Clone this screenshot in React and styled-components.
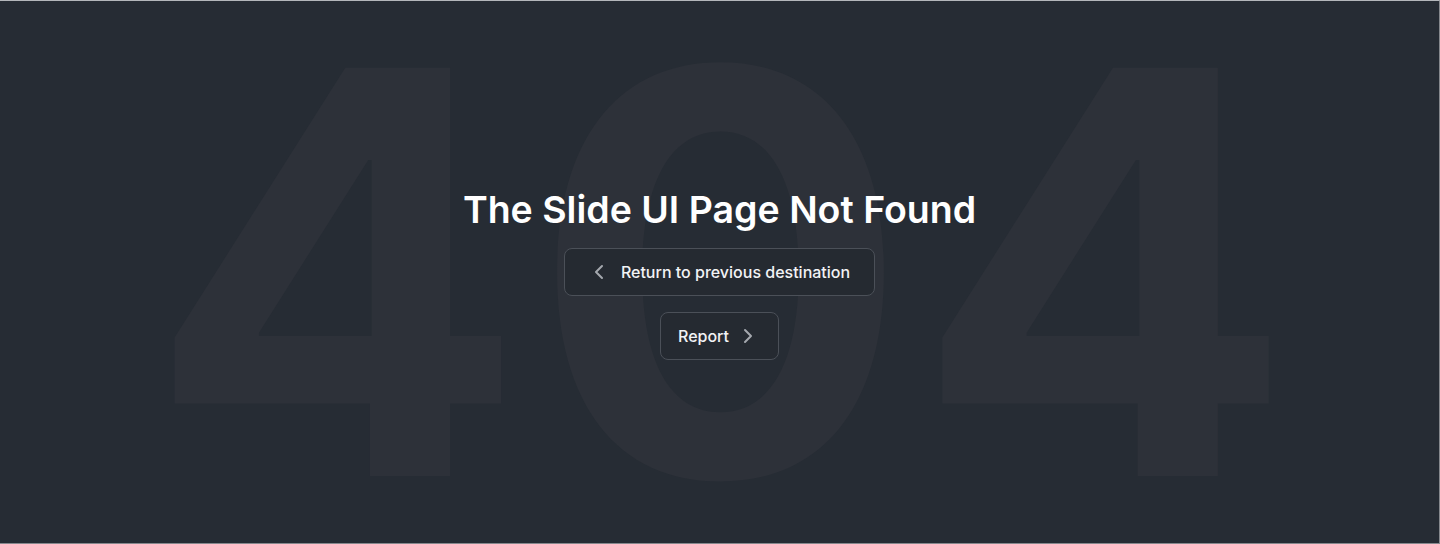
import React from "react";
import styled, { createGlobalStyle } from "styled-components";
import { ChevronLeft, ChevronRight } from "lucide-react";

const GlobalStyle = createGlobalStyle`
  html, body {
    margin: 0;
    padding: 0;
    background: #262c34;
  }
  * {
    box-sizing: border-box;
  }
`;

const Page = styled.main`
  width: 1440px;
  height: 544px;
  display: grid;
  grid-template-rows: 100%;
  grid-template-columns: 100%;
  place-items: center;
  overflow: hidden;
  background: #262c34;
  border-top: 1px solid #b4b7bb;
  border-bottom: 1px solid #85888d;
  border-right: 1px solid #85888d;
  font-family: Inter, "Noto Sans", sans-serif;
`;

const BigCode = styled.div`
  grid-area: 1 / 1;
  font-size: 561px;
  font-weight: 700;
  line-height: 1;
  letter-spacing: 5px;
  padding-left: 5px;
  color: #2d3139;
  user-select: none;
  transform: translateX(1px);
`;

const Content = styled.section`
  grid-area: 1 / 1;
  z-index: 1;
  display: flex;
  flex-direction: column;
  align-items: center;
`;

const Title = styled.h1`
  margin: 0 0 12px;
  font-size: 37.5px;
  line-height: 52px;
  font-weight: 600;
  color: #ffffff;
`;

const Actions = styled.div`
  display: flex;
  flex-direction: column;
  align-items: center;
  gap: 16px;
`;

const Button = styled.button`
  height: 48px;
  display: inline-flex;
  align-items: center;
  gap: ${(p) => p.$gap || 8}px;
  padding: ${(p) => p.$pad || "0 16px"};
  border: 1px solid #4b5058;
  border-radius: 8px;
  background: #252a31;
  color: #f2f3f5;
  font-family: Inter, "Noto Sans", sans-serif;
  font-size: 16px;
  font-weight: 500;
  cursor: pointer;

  svg {
    color: #a4a8ae;
    flex-shrink: 0;
  }
`;

const App = () => {
  return (
    <>
      <GlobalStyle />
      <Page>
        <BigCode>404</BigCode>
        <Content>
          <Title>The Slide UI Page Not Found</Title>
          <Actions>
            <Button $pad="0 24px 0 22px" $gap={10}>
              <ChevronLeft size={24} strokeWidth={2} />
              Return to previous destination
            </Button>
            <Button $pad="0 18px 0 17px" $gap={7}>
              Report
              <ChevronRight size={24} strokeWidth={2} />
            </Button>
          </Actions>
        </Content>
      </Page>
    </>
  );
};

export default App;
